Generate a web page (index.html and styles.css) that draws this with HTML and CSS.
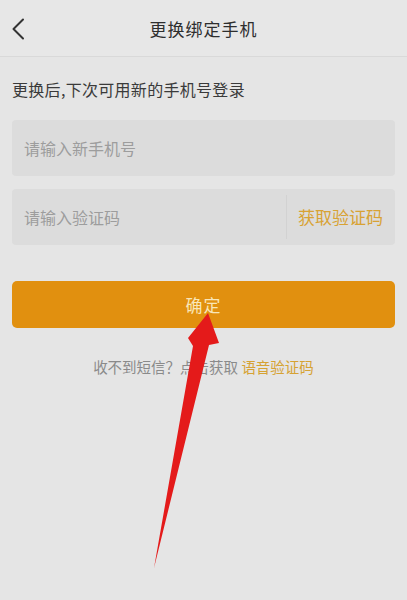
FILE: index.html
```html
<!DOCTYPE html>
<html lang="zh">
<head>
<meta charset="utf-8">
<link rel="stylesheet" href="styles.css">
</head>
<body>
<div class="page">
  <header class="nav">
    <svg class="back" width="14" height="22" viewBox="0 0 14 22"><path d="M12 1.5 L2.5 11 L12 20.5" fill="none" stroke="#333" stroke-width="2" stroke-linecap="round" stroke-linejoin="round"/></svg>
    <div class="title">更换绑定手机</div>
  </header>
  <main class="content">
    <p class="hint">更换后,下次可用新的手机号登录</p>
    <div class="field"><span class="ph">请输入新手机号</span></div>
    <div class="field code-field">
      <span class="ph">请输入验证码</span>
      <span class="get-code">获取验证码</span>
    </div>
    <button class="confirm">确定</button>
    <p class="voice">收不到短信？点击获取 <span class="link">语音验证码</span></p>
  </main>
  <svg class="arrow" width="407" height="600" viewBox="0 0 407 600">
    <path d="M208 313 L219 343 L209 345 L154 568 L193 346 L188 338 Z" fill="#e41a1a"/>
  </svg>
</div>
</body>
</html>
```
FILE: styles.css
```css
* { box-sizing: border-box; }
html, body { margin: 0; padding: 0; }
body {
  background: #e5e5e5;
  font-family: "Noto Sans CJK SC", "Noto Sans", sans-serif;
  width: 407px;
  height: 600px;
  overflow: hidden;
}
.page { position: relative; width: 407px; height: 600px; }
.nav {
  position: relative;
  height: 57px;
  border-bottom: 1px solid #d9d9d9;
  background: #e7e7e7;
  display: flex;
  align-items: center;
  justify-content: center;
}
.back { position: absolute; left: 11px; top: 18px; }
.title { font-size: 17px; color: #2e2e2e; letter-spacing: 1px; }
.content { padding: 0 12px; display: flex; flex-direction: column; }
.hint { margin: 21px 0 0; font-size: 16px; letter-spacing: 0.3px; color: #3a3a3a; line-height: 22px; }
.field {
  margin-top: 20px;
  height: 56px;
  background: #dcdcdc;
  border-radius: 4px;
  display: flex;
  align-items: center;
  padding-left: 12px;
}
.field + .field { margin-top: 13px; }
.ph { font-size: 16px; color: #9d9d9d; flex: 1; }
.code-field { padding-right: 12px; }
.get-code {
  font-size: 17px;
  color: #d8a233;
  border-left: 1px solid #d2d2d2;
  padding-left: 11px;
  line-height: 44px;
}
.confirm {
  margin-top: 36px;
  height: 47px;
  border: none;
  border-radius: 5px;
  background: #e1900f;
  color: #f8e6b8;
  font-family: inherit;
  font-size: 17px;
  letter-spacing: 1px;
}
.voice { margin: 29px 0 0; text-align: center; font-size: 14.5px; color: #8a8a8a; line-height: 20px; }
.link { color: #d6a233; }
.arrow { position: absolute; left: 0; top: 0; pointer-events: none; }
```
